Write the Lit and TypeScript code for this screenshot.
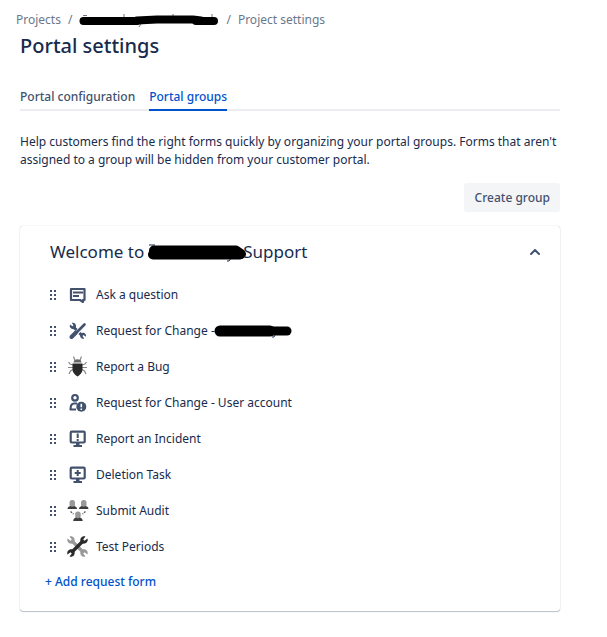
import { LitElement, html, svg, css } from "lit";
import { customElement, property, state } from "lit/decorators.js";

const icons: Record<string, unknown> = {
  question: svg`<path d="M4 5h13.500v11h-1.500v2l-3-2H4z" fill="none" stroke="#42526e" stroke-width="2.200" stroke-linejoin="round"/><path d="M6 8.500h10M6 12h6" stroke="#42526e" stroke-width="2"/>`,
  tools: svg`<g fill="none" stroke="#42526e"><path d="M17.500 4.500L10 12" stroke-width="2.600" stroke-linecap="round"/><path d="M9 12.500L4.500 17" stroke-width="4" stroke-linecap="round"/><path d="M7 7.500l2.500 2.500M12.500 13l2 2" stroke-width="3"/></g><path d="M3 4.500l2.500 1.800 1-1L4.800 3c2-.8 4.500.7 4.300 3.500L7.300 9C4.500 9.800 2 7.500 3 4.500zM18.800 16.800l-2.300-1.800-1 1 1.700 2.500c-2.300.8-4.600-1-4.200-3.800l2-1.800c2.500-.5 4.800 1.300 3.800 3.900z" fill="#42526e"/>`,
  bug: svg`<path d="M8 4.500L6.500 .5M13 4.500L14.500 .5M6 9L3 8l-1.500-2M15 9l3-1 1.500-2M6 11.500H1M15 11.500h5M6 13.500L3.500 15 2 18M15 13.500l2.500 1.500 1.500 3" fill="none" stroke="#888" stroke-width="1.200"/><path d="M6.500 6.500C6.800 2.300 14.200 2.300 14.500 6.500z" fill="#666"/><path d="M5.500 7.500h10v6c0 3-2.500 5.500-5 7-2.500-1.500-5-4-5-7z" fill="#292929"/>`,
  account: svg`<circle cx="8" cy="5.800" r="2.800" fill="none" stroke="#42526e" stroke-width="2.200"/><path d="M10 11.500H7C4.500 11.500 3.500 13.500 3.500 17.500H9" fill="none" stroke="#42526e" stroke-width="2.200" stroke-linejoin="round"/><circle cx="14.300" cy="14.800" r="5" fill="#42526e"/><path d="M14.300 11.800v3.500M14.300 16.400v1.600" stroke="#fff" stroke-width="1.600"/>`,
  incident: svg`<rect x="3.700" y="3.700" width="14" height="10.800" rx="1" fill="none" stroke="#42526e" stroke-width="2.200"/><path d="M9 15h3.500v2H15v2H6.500v-2H9z" fill="#42526e"/><path d="M10.700 5.500v4.500M10.700 11v2" stroke="#42526e" stroke-width="2"/>`,
  deletion: svg`<rect x="3.700" y="3.700" width="14" height="10.800" rx="1" fill="none" stroke="#42526e" stroke-width="2.200"/><path d="M9 15h3.500v2H15v2H6.500v-2H9z" fill="#42526e"/><path d="M10.700 6v6M7.700 9h6" stroke="#42526e" stroke-width="2"/>`,
  audit: svg`<g fill="#999"><rect x="2.500" y="0" width="5.500" height="7" rx="2.500"/><rect x="14" y="0" width="5.500" height="7" rx="2.500"/><rect x="8.200" y="11.500" width="5.500" height="7" rx="2.500"/></g><g fill="#3d3d3d"><path d="M.5 9q0-2.500 3-3 1.700 1.500 3.500 0 3 .5 3 3zM12 9q0-2.500 3-3 1.700 1.500 3.500 0 3 .5 3 3zM6.200 21q0-3 3-3.500 1.700 1.500 3.500 0 3 .5 3 3.500z"/></g><path d="M3.500 11.500l3 2.500M18.500 11.500l-3 2.500" stroke="#555" stroke-width="1.200" stroke-dasharray="2 1"/>`,
  wrenches: svg`<path d="M5 5l11 11" stroke="#999" stroke-width="3.200"/><path d="M.5 2.500l3 2.300L4.800 3.500 2.500 .5c3-1.200 6 1.500 5 5L5.500 7.500C2 8.300-.5 5.500 .5 2.500zM20.500 18.500l-3-2.300-1.300 1.300 2.300 3c-3 1.200-6-1.500-5-5l2-2c3.500-.8 6 2 5 5z" fill="#999"/><path d="M16 5L5 16" stroke="#2b2b2b" stroke-width="3.400"/><path d="M20.500 2.500l-3 2.300L16.200 3.500 18.500 .5c-3-1.200-6 1.500-5 5l2 2c3.500.8 6-2 5-5zM.5 18.500l3-2.300L4.800 17.500 2.500 20.500c3 1.200 6-1.500 5-5l-2-2c-3.500-.8-6 2-5 5z" fill="#2b2b2b"/>`,
};

interface RequestForm {
  icon: string;
  label: string;
  redacted?: boolean;
}

const forms: RequestForm[] = [
  { icon: "question", label: "Ask a question" },
  { icon: "tools", label: "Request for Change -", redacted: true },
  { icon: "bug", label: "Report a Bug" },
  { icon: "account", label: "Request for Change - User account" },
  { icon: "incident", label: "Report an Incident" },
  { icon: "deletion", label: "Deletion Task" },
  { icon: "audit", label: "Submit Audit" },
  { icon: "wrenches", label: "Test Periods" },
];

@customElement("request-row")
export class RequestRow extends LitElement {
  @property({ attribute: false }) form!: RequestForm;

  static styles = css`
    :host {
      display: flex;
      align-items: center;
      height: 36px;
      font-size: 12px;
    }
    .grip {
      width: 8px;
      height: 10px;
      margin-right: 11px;
      flex: none;
    }
    .icon {
      width: 22px;
      height: 22px;
      margin-right: 7px;
      flex: none;
    }
    .ink {
      width: 80px;
      height: 14px;
      margin-left: -2px;
      flex: none;
    }
  `;

  render() {
    return html`
      <svg class="grip" viewBox="0 0 8 10" fill="#42526e" aria-hidden="true">
        ${[0, 4, 8].map((y) => svg`<rect x="2" y=${y} width="2" height="2"/><rect x="6" y=${y} width="2" height="2"/>`)}
      </svg>
      <svg class="icon" viewBox="0 0 22 22" overflow="visible" aria-hidden="true">${icons[this.form.icon]}</svg>
      <span>${this.form.label}</span>
      ${this.form.redacted
        ? html`<svg class="ink" viewBox="0 0 80 14" aria-hidden="true">
            <path d="M7 7H57" stroke="#000" stroke-width="11" stroke-linecap="round" />
            <path d="M55 7H74" stroke="#000" stroke-width="9" stroke-linecap="round" />
            <path d="M62 11l-1 2h-2" fill="none" stroke="#172b4d" />
          </svg>`
        : null}
    `;
  }
}

@customElement("app-root")
export class AppRoot extends LitElement {
  @state() private open = true;

  static styles = css`
    :host {
      display: block;
      padding: 10px 47px 25px 20px;
      background: #fff;
      color: #172b4d;
      font-family: "Segoe UI", "Noto Sans", sans-serif;
      font-size: 12px;
      line-height: 18px;
    }
    a {
      text-decoration: none;
      color: inherit;
    }
    button {
      font: inherit;
      border: 0;
      cursor: pointer;
    }
    .crumbs {
      display: flex;
      align-items: center;
      gap: 7px;
      height: 20px;
      margin-left: -4px;
      color: #6b778c;
    }
    .crumb-ink {
      display: block;
      width: 140px;
      height: 14px;
    }
    h1 {
      margin: 0;
      font-size: 20px;
      line-height: 32px;
      font-weight: 500;
    }
    .tabs {
      display: flex;
      gap: 14px;
      margin-top: 24px;
      border-bottom: 2px solid #ebecf0;
      font-weight: 500;
      color: #42526e;
    }
    .tab {
      padding: 2px 0 3px;
      margin-bottom: -2px;
      border-bottom: 2px solid transparent;
    }
    .tab.active {
      color: #0052cc;
      border-color: #0052cc;
    }
    .help {
      margin: 22px -4px 14px 0;
    }
    .actions {
      display: flex;
      justify-content: flex-end;
    }
    .create {
      padding: 6px 10px 5px 11px;
      border-radius: 3px;
      background: #f4f5f7;
      color: #42526e;
      font-weight: 500;
    }
    .card {
      margin-top: 14px;
      padding: 0 18px 12px 28px;
      border-radius: 3px;
      box-shadow: 0 0 1px rgba(9, 30, 66, 0.31), 0 1px 1px rgba(9, 30, 66, 0.25);
    }
    .head {
      display: flex;
      align-items: center;
      justify-content: space-between;
      height: 51px;
    }
    h2 {
      display: flex;
      align-items: center;
      margin: 0 0 0 2px;
      font-size: 17px;
      line-height: 24px;
      font-weight: 400;
    }
    .title-ink {
      width: 104px;
      height: 20px;
      margin-right: -5px;
    }
    .toggle {
      display: flex;
      padding: 0;
      background: none;
    }
    .add {
      display: block;
      width: fit-content;
      margin-left: -3px;
      line-height: 34px;
      font-weight: 500;
      color: #0052cc;
    }
  `;

  render() {
    return html`
      <nav class="crumbs" aria-label="Breadcrumb">
        <a href="#projects">Projects</a><span>/</span>
        <a href="#project" aria-label="Project">
          <svg class="crumb-ink" viewBox="0 0 140 14">
            <path d="M4 2.500h4M45 1v3M93 2h2M133 1v3M62 11l-2 3" fill="none" stroke="#6b778c" />
            <path d="M4.500 8H58M117 8H135" stroke="#000" stroke-width="8" stroke-linecap="round" />
            <path d="M58 7.500l20-1h36l8 1" fill="none" stroke="#000" stroke-width="8" stroke-linecap="round" />
          </svg>
        </a>
        <span>/</span><a href="#settings">Project settings</a>
      </nav>
      <h1>Portal settings</h1>
      <nav class="tabs" aria-label="Portal settings">
        <a class="tab" href="#configuration">Portal configuration</a>
        <a class="tab active" href="#groups" aria-current="page">Portal groups</a>
      </nav>
      <p class="help">
        Help customers find the right forms quickly by organizing your portal groups. Forms that aren't assigned to a
        group will be hidden from your customer portal.
      </p>
      <div class="actions"><button class="create">Create group</button></div>
      <section class="card">
        <div class="head">
          <h2>
            <span>Welcome to</span>
            <svg class="title-ink" viewBox="0 0 104 20" aria-hidden="true">
              <path d="M5 3h6M87 16l-2 3h-2" fill="none" stroke="#172b4d" />
              <path d="M10 8.500H92L97 12" fill="none" stroke="#000" stroke-width="10" stroke-linecap="round" stroke-linejoin="round" />
              <path d="M9 12.500H96" stroke="#000" stroke-width="10" stroke-linecap="round" />
            </svg>
            <span>Support</span>
          </h2>
          <button class="toggle" aria-label="Toggle group" aria-expanded=${this.open} @click=${() => (this.open = !this.open)}>
            <svg width="14" height="14" viewBox="0 0 14 14">
              <path d="M3 9l4-4 4 4" fill="none" stroke="#42526e" stroke-width="2" stroke-linecap="round" stroke-linejoin="round" />
            </svg>
          </button>
        </div>
        ${this.open
          ? html`${forms.map((form) => html`<request-row .form=${form}></request-row>`)}
              <a class="add" href="#add">+ Add request form</a>`
          : null}
      </section>
    `;
  }
}
